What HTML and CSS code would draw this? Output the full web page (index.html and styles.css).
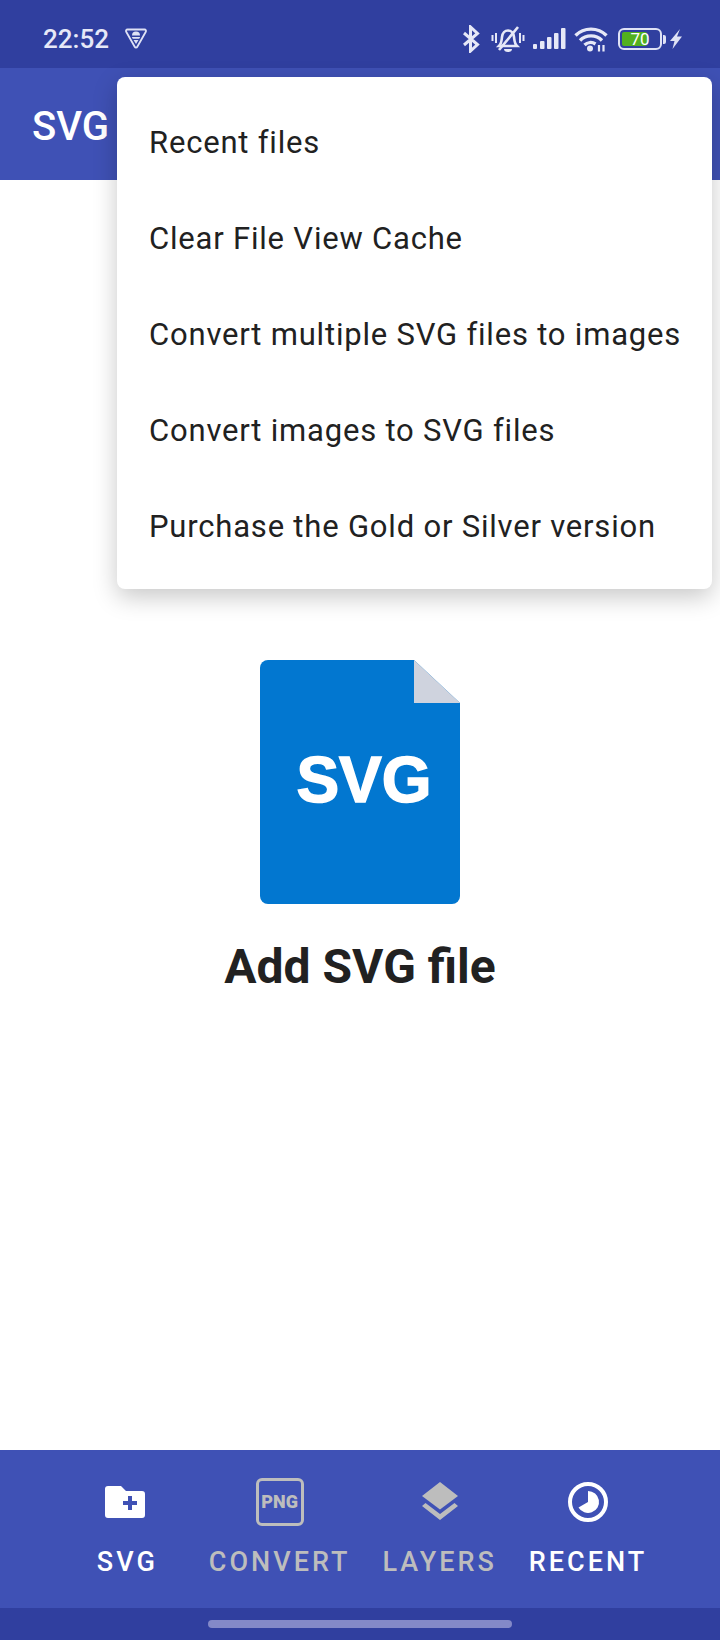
FILE: index.html
```html
<!DOCTYPE html>
<html lang="en">
<head>
  <meta charset="UTF-8">
  <title>SVG Converter</title>
  <link rel="stylesheet" href="styles.css">
</head>
<body>
  <div class="screen">
    <div class="status-bar">
      <div class="status-left">
        <span class="time">22:52</span>
        <svg class="vpn-icon" width="24" height="24" viewBox="0 0 24 24">
          <path d="M3.500 2.500h17a1.500 1.500 0 0 1 1.300 2.300l-8.500 15a1.500 1.500 0 0 1-2.600 0l-8.500-15A1.500 1.500 0 0 1 3.500 2.500z" fill="none" stroke="#dfe2f5" stroke-width="1.800"/>
          <path d="M8 8.500a4 4 0 0 1 8 0zM7.800 10h8.400l-1 1.800H8.800zM9.500 13h5L12 17z" fill="#dfe2f5"/>
        </svg>
      </div>
      <div class="status-right">
        <svg class="bt-icon" width="18" height="28" viewBox="0 0 18 28">
          <path d="M2 8l13.500 11.500L8.500 26V2l7 6.500L2 20" fill="none" stroke="#e6e8f7" stroke-width="3"/>
        </svg>
        <svg class="bell-icon" width="34" height="28" viewBox="0 0 34 28">
          <path d="M8 21c2.500-2.500 2.500-5 3-9 .5-4 3-6.500 6-6.500s5.500 2.500 6 6.500c.5 4 .5 6.500 3 9z" fill="none" stroke="#e6e8f7" stroke-width="2.600"/>
          <path d="M13 24h8a4 3 0 0 1-8 0z" fill="#e6e8f7"/>
          <path d="M8 25L27 2" stroke="#e6e8f7" stroke-width="2.600"/>
          <path d="M1.500 10v6M5 8v10M29 8v10M32.500 10v6" stroke="#e6e8f7" stroke-width="2"/>
        </svg>
        <svg class="signal-icon" width="33" height="24" viewBox="0 0 33 24">
          <rect x="0" y="17" width="4" height="5" rx="1" fill="#e6e8f7"/>
          <rect x="7" y="14" width="4.500" height="8" rx="1" fill="#e6e8f7"/>
          <rect x="14" y="10" width="4.500" height="12" rx="1" fill="#e6e8f7"/>
          <rect x="21" y="6" width="4.500" height="16" rx="1" fill="#e6e8f7"/>
          <rect x="28" y="1" width="4.500" height="21" rx="1" fill="#e6e8f7"/>
        </svg>
        <svg class="wifi-icon" width="34" height="26" viewBox="0 0 34 26">
          <path d="M1.500 9.500a22 22 0 0 1 31 0M6 14.500a15.500 15.500 0 0 1 22 0M10.500 19a9 9 0 0 1 11 -1" fill="none" stroke="#e6e8f7" stroke-width="3.400"/>
          <circle cx="16" cy="22.500" r="3" fill="#e6e8f7"/>
          <path d="M25 19v6.500M29.500 19v6.500" stroke="#e6e8f7" stroke-width="2.200"/>
        </svg>
        <div class="battery">
          <div class="battery-body">
            <div class="battery-fill"></div>
            <span class="battery-level">70</span>
          </div>
          <div class="battery-cap"></div>
        </div>
        <svg class="bolt-icon" width="12" height="20" viewBox="0 0 12 20">
          <path d="M10 0L0 12h4.500L2.500 20 12 7.500H7z" fill="#dfe2f5"/>
        </svg>
      </div>
    </div>

    <header class="app-bar">
      <span class="app-title">SVG</span>
    </header>

    <main class="content">
      <svg class="file-icon" width="200" height="244" viewBox="0 0 200 244">
        <path d="M8 0h146l46 43v193a8 8 0 0 1-8 8H8a8 8 0 0 1-8-8V8a8 8 0 0 1 8-8z" fill="#0277d0"/>
        <path d="M154 0l46 43h-46z" fill="#cfd3de"/>
        <text class="file-icon-text" x="104" y="142" text-anchor="middle">SVG</text>
      </svg>
      <h1 class="add-title">Add SVG file</h1>
    </main>

    <nav class="tabs">
      <div class="tab active">
        <svg width="48" height="48" viewBox="2 0 48 48">
          <path d="M7 8h13l5 5h16a3 3 0 0 1 3 3v21a3 3 0 0 1-3 3H7a3 3 0 0 1-3-3V11a3 3 0 0 1 3-3z" fill="#fff"/>
          <path d="M22 23h5v-5h4v5h5v4h-5v5h-4v-5h-5z" fill="#3f51b5"/>
        </svg>
        <span class="tab-label">SVG</span>
      </div>
      <div class="tab">
        <div class="png-box">PNG</div>
        <span class="tab-label">CONVERT</span>
      </div>
      <div class="tab">
        <svg width="48" height="48" viewBox="0 0 48 48">
          <path d="M24 4l18 14-18 13.500L6 18z" fill="#bdbdbd"/>
          <path d="M9.500 25L6 28l18 14 18-14-3.500-3L24 36z" fill="#bdbdbd"/>
        </svg>
        <span class="tab-label">LAYERS</span>
      </div>
      <div class="tab active">
        <svg width="48" height="48" viewBox="0 0 48 48">
          <circle cx="24" cy="24" r="18" fill="none" stroke="#fff" stroke-width="4"/>
          <path d="M24 13a11 11 0 1 1-9.500 16.500L24 24z" fill="#fff"/>
        </svg>
        <span class="tab-label">RECENT</span>
      </div>
    </nav>

    <div class="gesture-bar">
      <div class="gesture-handle"></div>
    </div>

    <div class="menu">
      <div class="menu-item">Recent files</div>
      <div class="menu-item">Clear File View Cache</div>
      <div class="menu-item">Convert multiple SVG files to images</div>
      <div class="menu-item">Convert images to SVG files</div>
      <div class="menu-item">Purchase the Gold or Silver version</div>
    </div>
  </div>
</body>
</html>
```

FILE: styles.css
```css
* {
  box-sizing: border-box;
}

body {
  margin: 0;
  background: #fff;
  font-family: Roboto, sans-serif;
}

.screen {
  position: relative;
  display: flex;
  flex-direction: column;
  width: 720px;
  height: 1640px;
  overflow: hidden;
}

.status-bar {
  display: flex;
  justify-content: space-between;
  align-items: center;
  height: 68px;
  padding: 10px 38px 0 43px;
  background: #303f9f;
  color: #e6e8f7;
}

.status-left {
  display: flex;
  align-items: center;
  gap: 15px;
}

.time {
  font-size: 26px;
  font-weight: 500;
}

.status-right {
  display: flex;
  align-items: center;
  gap: 8px;
}

.bt-icon {
  margin-right: 3px;
}

.wifi-icon {
  margin-right: 2px;
}

.bolt-icon {
  margin-left: -4px;
}

.battery {
  display: flex;
  align-items: center;
  gap: 1px;
}

.battery-body {
  position: relative;
  width: 44px;
  height: 22px;
  padding: 2px;
  border: 2px solid #dfe2f5;
  border-radius: 6px;
}

.battery-fill {
  width: 70%;
  height: 100%;
  border-radius: 2px;
  background: #52b01e;
}

.battery-level {
  position: absolute;
  inset: 0;
  font-size: 17px;
  line-height: 18px;
  text-align: center;
  color: #fff;
}

.battery-cap {
  width: 3px;
  height: 9px;
  border-radius: 0 2px 2px 0;
  background: #dfe2f5;
}

.app-bar {
  display: flex;
  align-items: center;
  height: 112px;
  padding: 4px 0 0 32px;
  background: #3f51b5;
}

.app-title {
  font-size: 40px;
  font-weight: 500;
  color: #fff;
}

.content {
  flex: 1;
  display: flex;
  flex-direction: column;
  align-items: center;
  padding-top: 480px;
}

.file-icon-text {
  font-family: "Liberation Sans", sans-serif;
  font-size: 64px;
  font-weight: 700;
  fill: #fff;
  stroke: #fff;
  stroke-width: 1.5px;
}

.add-title {
  margin: 34px 0 0;
  font-size: 48px;
  font-weight: 700;
  color: #212121;
}

.tabs {
  display: flex;
  justify-content: center;
  height: 158px;
  padding: 28px 0 0 5px;
  background: #3f51b5;
}

.tab {
  display: flex;
  flex-direction: column;
  align-items: center;
  gap: 20px;
  min-width: 131px;
  padding: 0 16px;
  color: #bdbdbd;
}

.tab.active {
  color: #fff;
}

.tab-label {
  font-size: 27px;
  font-weight: 500;
  letter-spacing: 3px;
}

.png-box {
  width: 48px;
  height: 48px;
  border: 3px solid #bdbdbd;
  border-radius: 6px;
  font-size: 18px;
  font-weight: 900;
  line-height: 42px;
  text-align: center;
}

.gesture-bar {
  display: flex;
  justify-content: center;
  height: 32px;
  padding-top: 12px;
  background: #303f9f;
}

.gesture-handle {
  width: 304px;
  height: 8px;
  border-radius: 4px;
  background: #8389c8;
}

.menu {
  position: absolute;
  top: 77px;
  left: 117px;
  width: 595px;
  padding: 16px 0;
  border-radius: 8px;
  background: #fff;
  box-shadow: 0 8px 24px rgba(0, 0, 0, 0.22);
}

.menu-item {
  height: 96px;
  padding-left: 32px;
  font-size: 31px;
  line-height: 100px;
  letter-spacing: 0.8px;
  color: #212121;
  white-space: nowrap;
}
```
